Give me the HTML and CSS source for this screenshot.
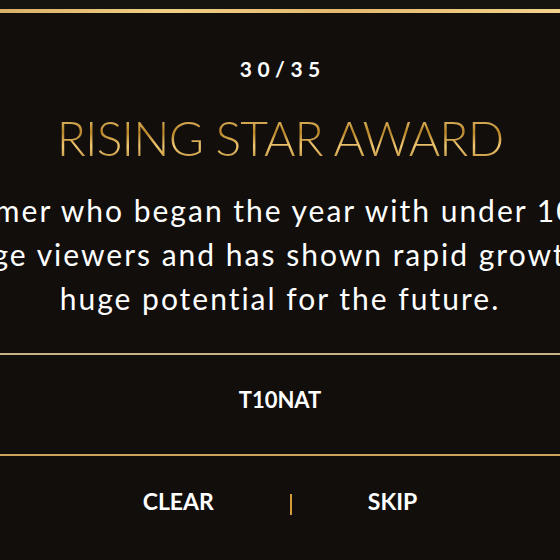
FILE: index.html
```html
<!DOCTYPE html>
<html lang="en">
<head>
<meta charset="utf-8">
<title>Rising Star Award</title>
<link rel="stylesheet" href="styles.css">
</head>
<body>
<div class="topbar"></div>
<div class="goldline"></div>
<main class="card">
  <div class="counter">30/35</div>
  <h1 class="title">RISING STAR AWARD</h1>
  <p class="desc">
    <span class="line">Streamer who began the year with under 10,000</span>
    <span class="line">average viewers and has shown rapid growth and</span>
    <span class="line">huge potential for the future.</span>
  </p>
</main>
<div class="rule rule-pale"></div>
<div class="answer">T10NAT</div>
<div class="rule rule-gold"></div>
<div class="actions">
  <button class="btn">CLEAR</button>
  <span class="divider"></span>
  <button class="btn">SKIP</button>
</div>
</body>
</html>
```
FILE: styles.css
```css
html, body {
  margin: 0;
  padding: 0;
  background: #110e0c;
  width: 560px;
  height: 560px;
  overflow: hidden;
}
body {
  font-family: Lato, "Open Sans", sans-serif;
  color: #ffffff;
}
.topbar {
  height: 9px;
  background: #16140f;
}
.goldline {
  height: 4px;
  background: linear-gradient(90deg, #d9b069 0%, #f1cf86 30%, #e3b96e 60%, #f3d28c 100%);
}
.card {
  display: flex;
  flex-direction: column;
  align-items: center;
  text-align: center;
}
.counter {
  margin-top: 44px;
  font-size: 21px;
  line-height: 24px;
  letter-spacing: 5.5px;
  padding-left: 5.5px;
  font-weight: 700;
}
.title {
  margin: 29px 0 0;
  font-size: 48px;
  line-height: 56px;
  font-weight: 300;
  letter-spacing: -0.8px;
  background: linear-gradient(180deg, #f4d488 0%, #b98528 40%, #f0c873 65%, #a9771f 100%);
  -webkit-background-clip: text;
  background-clip: text;
  color: transparent;
  white-space: nowrap;
}
.desc {
  margin: 22px 0 0;
  width: 560px;
  font-size: 30px;
  line-height: 44px;
  letter-spacing: 2px;
  display: flex;
  flex-direction: column;
  align-items: center;
}
.line {
  white-space: nowrap;
}
.rule {
  height: 2px;
}
.rule-pale {
  margin-top: 33px;
  background: #c9b489;
}
.rule-gold {
  background: #c9a45a;
}
.answer {
  padding: 32px 0 41px;
  text-align: center;
  font-size: 22px;
  line-height: 26px;
  font-weight: 700;
}
.actions {
  display: flex;
  justify-content: center;
  align-items: center;
  gap: 76px;
  padding-top: 32px;
}
.btn {
  background: none;
  border: 0;
  padding: 0;
  color: #ffffff;
  font-family: Lato, "Open Sans", sans-serif;
  font-size: 23px;
  line-height: 27px;
  font-weight: 700;
}
.divider {
  width: 2px;
  height: 21px;
  margin-top: 6px;
  background: #d59a3a;
}
```
